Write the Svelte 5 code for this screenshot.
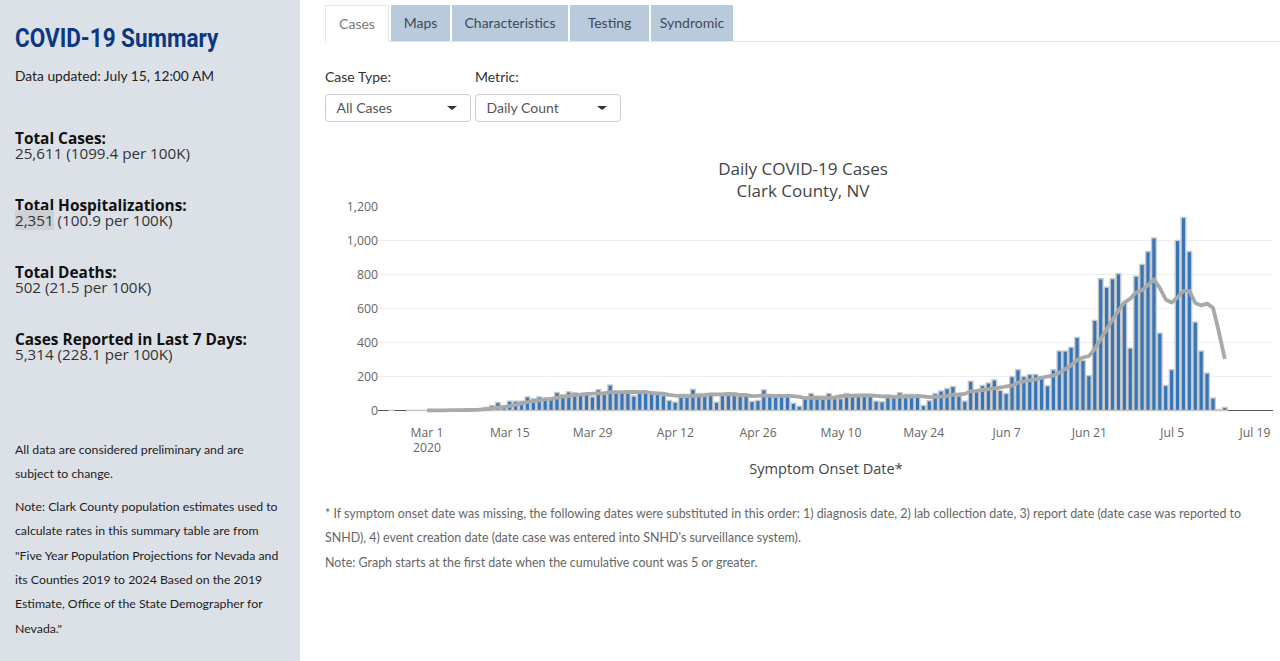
<script lang="ts">
  const tabs = ["Cases", "Maps", "Characteristics", "Testing", "Syndromic"]

  const stats = [
    { label: "Total Hospitalizations:", value: "2,351", rest: " (100.9 per 100K)", hl: true },
    { label: "Total Deaths:", value: "502", rest: " (21.5 per 100K)" },
    { label: "Cases Reported in Last 7 Days:", value: "5,314", rest: " (228.1 per 100K)" },
  ]

  // daily counts, Feb 24 to Jul 14
  const counts = [
    1, 0, 0, 1, 1, 1,
    1, 1, 2, 2, 3, 3, 4, 6, 8, 12, 18, 30, 47, 25, 55, 55, 55, 80, 70, 80, 70, 70, 106, 92, 110, 105, 100, 100, 80, 123, 95,
    150, 105, 105, 105, 85, 110, 110, 100, 95, 88, 59, 49, 95, 95, 125, 100, 100, 100, 49, 100, 105, 105, 85, 95, 53, 59, 122, 92, 92, 92,
    92, 43, 25, 80, 100, 85, 85, 100, 70, 70, 100, 95, 95, 95, 95, 55, 51, 90, 85, 105, 95, 95, 80, 29, 57, 100, 115, 129, 141, 86, 55,
    172, 113, 147, 162, 180, 118, 100, 200, 240, 200, 212, 212, 190, 145, 240, 350, 350, 372, 430, 295, 205, 530, 775, 725, 775, 805, 630, 367, 790, 860,
    935, 1015, 455, 147, 240, 1000, 1135, 935, 520, 350, 220, 73, 6, 18,
  ]

  const dayW = 5.91
  const x0 = 66.5 // Feb 24 in svg coords
  const y0 = 260.5
  const yScale = 0.17
  const dx = (i: number) => x0 + i * dayW
  const dy = (v: number) => y0 - v * yScale

  const yTicks = [0, 200, 400, 600, 800, 1000, 1200]
  const xTicks = ["Mar 1", "Mar 15", "Mar 29", "Apr 12", "Apr 26", "May 10", "May 24", "Jun 7", "Jun 21", "Jul 5", "Jul 19"]

  const trend = counts
    .map((_, i) => {
      const win = counts.slice(Math.max(0, i - 6), i + 1)
      return [dx(i), dy(win.reduce((a, b) => a + b, 0) / 7)]
    })
    .slice(6)
    .map((p) => p[0].toFixed(1) + "," + p[1].toFixed(1))
    .join(" ")
</script>

<div class="page">
  <aside>
    <h1><span>COVID-19 Summary</span></h1>
    <p class="updated">Data updated: July 15, 12:00 AM</p>

    <div class="stat first">
      <strong>Total Cases:</strong>
      <span class="val">25,611 (1099.4 per 100K)</span>
    </div>
    {#each stats as s}
      <div class="stat">
        <strong>{s.label}</strong>
        <span class="val"><span class:hl={s.hl}>{s.value}</span>{s.rest}</span>
      </div>
    {/each}

    <div class="notes">
      <p>All data are considered preliminary and are subject to change.</p>
      <p>Note: Clark County population estimates used to calculate rates in this summary table are from "Five Year Population Projections for Nevada and its Counties 2019 to 2024 Based on the 2019 Estimate, Office of the State Demographer for Nevada."</p>
    </div>
  </aside>

  <main>
    <ul class="tabs">
      {#each tabs as t, i}
        <li class:active={i === 0}>{t}</li>
      {/each}
    </ul>

    <div class="filters">
      <div class="filter">
        <span class="flabel">Case Type:</span>
        <div class="select">All Cases<i class="caret"></i></div>
      </div>
      <div class="filter">
        <span class="flabel">Metric:</span>
        <div class="select">Daily Count<i class="caret"></i></div>
      </div>
    </div>

    <svg class="chart" width="955" height="335" viewBox="0 0 955 335">
      <text class="title" x="478" y="25">Daily COVID-19 Cases</text>
      <text class="title" x="478" y="47">Clark County, NV</text>

      {#each yTicks as v}
        {#if v > 0 && v < 1200}
          <line class="grid" x1="53" x2="948" y1={dy(v)} y2={dy(v)} />
        {/if}
        <text class="ytick" x="53" y={dy(v) + 4.5}>{v.toLocaleString("en-US")}</text>
      {/each}

      <line class="zero" x1="53" x2="948" y1={y0} y2={y0} />

      {#each counts as c, i}
        {#if c > 0}
          <rect class="bar" x={dx(i) - 2.3} y={dy(c)} width="4.6" height={c * yScale} />
        {/if}
      {/each}

      <polyline class="trend" points={trend} />

      {#each xTicks as t, i}
        <text class="xtick" x={102 + i * 82.8} y="287">{t}</text>
      {/each}
      <text class="xtick" x="102" y="302">2020</text>
      <text class="xlabel" x="501" y="324">Symptom Onset Date*</text>
    </svg>

    <div class="foot">
      <p>* If symptom onset date was missing, the following dates were substituted in this order: 1) diagnosis date, 2) lab collection date, 3) report date (date case was reported to SNHD), 4) event creation date (date case was entered into SNHD's surveillance system).</p>
      <p>Note: Graph starts at the first date when the cumulative count was 5 or greater.</p>
    </div>
  </main>
</div>

<style>
  :global(body) {
    margin: 0;
    background: #fff;
    font-family: Lato, "Open Sans", sans-serif;
  }

  .page {
    display: flex;
    height: 661px;
    overflow: hidden;
  }

  aside {
    width: 300px;
    flex: none;
    box-sizing: border-box;
    background: #dce1e8;
    padding: 23px 15px 0;
    color: #222;
  }

  h1 {
    margin: 0;
    font-family: Roboto, sans-serif;
    font-size: 26px;
    line-height: 30px;
    font-weight: 700;
    color: #0c3782;
  }
  h1 span {
    display: inline-block;
    transform: scaleX(0.865);
    transform-origin: left center;
    white-space: nowrap;
  }

  .updated {
    margin: 13px 0 0;
    font-size: 13.8px;
    line-height: 20px;
  }

  .stat {
    display: flex;
    flex-direction: column;
    margin-top: 37px;
    font-family: "Open Sans", sans-serif;
    font-size: 15.2px;
    line-height: 16px;
    color: #333;
  }
  .stat.first { margin-top: 45px; }
  .stat strong {
    font-size: 15.4px;
    color: #111;
  }
  .val { margin-top: -2px; }
  .hl { background: #cdd0d4; }

  .notes {
    margin-top: 76px;
    width: 266px;
    font-size: 12.3px;
    line-height: 24.3px;
    color: #1c1c1c;
  }
  .notes p { margin: 0 0 8.5px; }

  main {
    flex: 1;
    min-width: 0;
    padding: 5px 0 0 25px;
  }

  .tabs {
    display: flex;
    gap: 2px;
    list-style: none;
    margin: 0;
    padding: 0;
    height: 36px;
    border-bottom: 1px solid #e3e6ea;
  }
  .tabs li {
    box-sizing: border-box;
    height: 36px;
    background: #b9cadc;
    color: #3f4a55;
    font-size: 14px;
    line-height: 36px;
    text-align: center;
  }
  .tabs li:nth-child(1) { width: 64px; }
  .tabs li:nth-child(2) { width: 59px; }
  .tabs li:nth-child(3) { width: 116px; }
  .tabs li:nth-child(4) { width: 79px; }
  .tabs li:nth-child(5) { width: 82px; }
  .tabs li.active {
    height: 37px;
    background: #fff;
    border: 1px solid #e3e6ea;
    border-bottom: none;
    color: #777;
    line-height: 35px;
  }

  .filters {
    display: flex;
    gap: 4px;
    margin-top: 25px;
  }
  .filter {
    display: flex;
    flex-direction: column;
    gap: 7px;
    width: 146px;
  }
  .flabel {
    font-size: 14px;
    line-height: 20px;
    color: #333;
  }
  .select {
    position: relative;
    box-sizing: border-box;
    height: 28px;
    border: 1px solid #ccc;
    border-radius: 4px;
    padding-left: 10.5px;
    font-size: 14px;
    line-height: 26px;
    color: #555;
  }
  .caret {
    position: absolute;
    right: 13px;
    top: 11px;
    border-left: 5px solid transparent;
    border-right: 5px solid transparent;
    border-top: 4.5px solid #333;
  }

  .chart {
    display: block;
    margin-top: 28px;
    font-family: "Open Sans", sans-serif;
  }
  .title {
    font-size: 17px;
    fill: #444;
    text-anchor: middle;
  }
  .grid { stroke: #eee; stroke-width: 1; }
  .zero { stroke: #555; stroke-width: 1; }
  .ytick {
    font-size: 12.3px;
    fill: #666;
    text-anchor: end;
  }
  .xtick {
    font-size: 12.2px;
    fill: #666;
    text-anchor: middle;
  }
  .xlabel {
    font-size: 14.6px;
    fill: #444;
    text-anchor: middle;
  }
  .bar {
    fill: #3575b8;
    stroke: #c8c8c8;
    stroke-width: 1.4;
  }
  .trend {
    fill: none;
    stroke: #a9a9a9;
    stroke-width: 3.8;
    stroke-linejoin: round;
  }

  .foot {
    margin-top: 17px;
    padding-right: 30px;
    font-size: 12.45px;
    line-height: 24.3px;
    color: #666;
  }
  .foot p { margin: 0; }
</style>
